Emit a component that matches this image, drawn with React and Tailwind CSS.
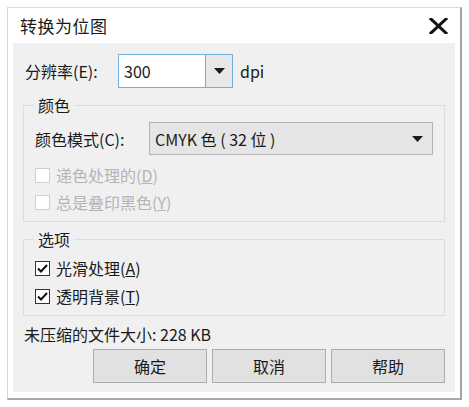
import React from 'react';

const FONT = { fontFamily: '"Noto Sans CJK SC", "Noto Sans", sans-serif' };

const Caret = ({ className = '' }) => (
  <svg width="11" height="6" viewBox="0 0 11 6" className={className}>
    <path d="M0 0 H11 L5.5 6 Z" fill="#1a1a1a" />
  </svg>
);

const CheckBox = ({ checked, disabled, label, hotkey, suffix }) => (
  <div className="flex items-center h-[26px]">
    <div
      className={`w-[15px] h-[15px] border flex items-center justify-center bg-white ${
        disabled ? 'border-[#cfcfcf] bg-[#f3f3f3]' : 'border-[#333]'
      }`}
    >
      {checked && (
        <svg width="11" height="9" viewBox="0 0 11 9">
          <path d="M1 4.5 L4 7.5 L10 1" fill="none" stroke="#111" strokeWidth="2" />
        </svg>
      )}
    </div>
    <span className={`ml-[6px] text-[16px] ${disabled ? 'text-[#b4b4b4]' : 'text-[#1a1a1a]'}`}>
      {label}(<span className="underline underline-offset-1">{hotkey}</span>){suffix}
    </span>
  </div>
);

const Group = ({ title, className = '', children }) => (
  <div className={`relative mx-[10px] border border-[#dcdcdc] ${className}`}>
    <span className="absolute -top-[12px] left-[10px] px-[4px] bg-[#f0f0f0] text-[16px] leading-[22px] text-[#1a1a1a]">
      {title}
    </span>
    {children}
  </div>
);

const DialogButton = ({ children }) => (
  <button className="w-[114px] h-[34px] bg-[#e1e1e1] border border-[#adadad] text-[16px] text-[#1a1a1a]">
    {children}
  </button>
);

export default function App() {
  return (
    <div className="w-[469px] h-[407px] bg-white pt-[7px] pl-[7px]" style={FONT}>
      <div className="w-[455px] h-[393px] flex flex-col border-t border-l border-t-[#dadada] border-l-[#d6d6d6] border-r-2 border-b-2 border-r-[#a2a2a2] border-b-[#a8a8a8]">
        {/* Title bar */}
        <div className="h-[35px] flex items-center justify-between pl-[12px] pr-[12px] shrink-0">
          <span className="text-[17px] text-[#1a1a1a] tracking-[0.5px]">转换为位图</span>
          <svg width="19" height="16" viewBox="0 0 19 16">
            <path d="M2 1 L17 15 M17 1 L2 15" stroke="#111" strokeWidth="3" strokeLinecap="square" />
          </svg>
        </div>

        {/* Body */}
        <div className="flex-1 mx-[5px] mb-[6px] bg-[#f0f0f0] flex flex-col pt-[11px]">
          <div className="flex items-center pl-[12px]">
            <span className="w-[93px] text-[16px] text-[#1a1a1a]">分辨率(E):</span>
            <div className="w-[115px] h-[34px] flex border border-[#6fb0df] bg-white">
              <span className="flex-1 flex items-center pl-[5px] text-[16px] text-[#1a1a1a]">300</span>
              <div className="w-[27px] flex items-center justify-center bg-[#e8e8e8] border-l border-[#6fb0df]">
                <Caret />
              </div>
            </div>
            <span className="ml-[7px] text-[16px] text-[#1a1a1a]">dpi</span>
          </div>

          <Group title="颜色" className="mt-[17px] pt-[16px] pl-[11px] pr-[11px] pb-[6px]">
            <div className="flex items-center">
              <span className="w-[114px] text-[16px] text-[#1a1a1a]">颜色模式(C):</span>
              <div className="flex-1 h-[33px] flex items-center justify-between pl-[5px] pr-[9px] bg-[#e5e5e5] border border-[#b4b4b4]">
                <span className="text-[16px] text-[#1a1a1a]">CMYK 色 ( 32 位 )</span>
                <Caret />
              </div>
            </div>
            <div className="mt-[7px]">
              <CheckBox disabled label="递色处理的" hotkey="D" />
              <div className="mt-[1px]">
                <CheckBox disabled label="总是叠印黑色" hotkey="Y" />
              </div>
            </div>
          </Group>

          <Group title="选项" className="mt-[17px] pt-[15px] pl-[11px] pb-[6px]">
            <CheckBox checked label="光滑处理" hotkey="A" />
            <div className="mt-[2px]">
              <CheckBox checked label="透明背景" hotkey="T" />
            </div>
          </Group>

          <div className="mt-[7px] pl-[11px] h-[22px] flex items-center text-[16px] text-[#1a1a1a]">
            未压缩的文件大小: 228 KB
          </div>

          <div className="mt-[4px] flex justify-end gap-[5px] pr-[10px]">
            <DialogButton>确定</DialogButton>
            <DialogButton>取消</DialogButton>
            <DialogButton>帮助</DialogButton>
          </div>
        </div>
      </div>
    </div>
  );
}
